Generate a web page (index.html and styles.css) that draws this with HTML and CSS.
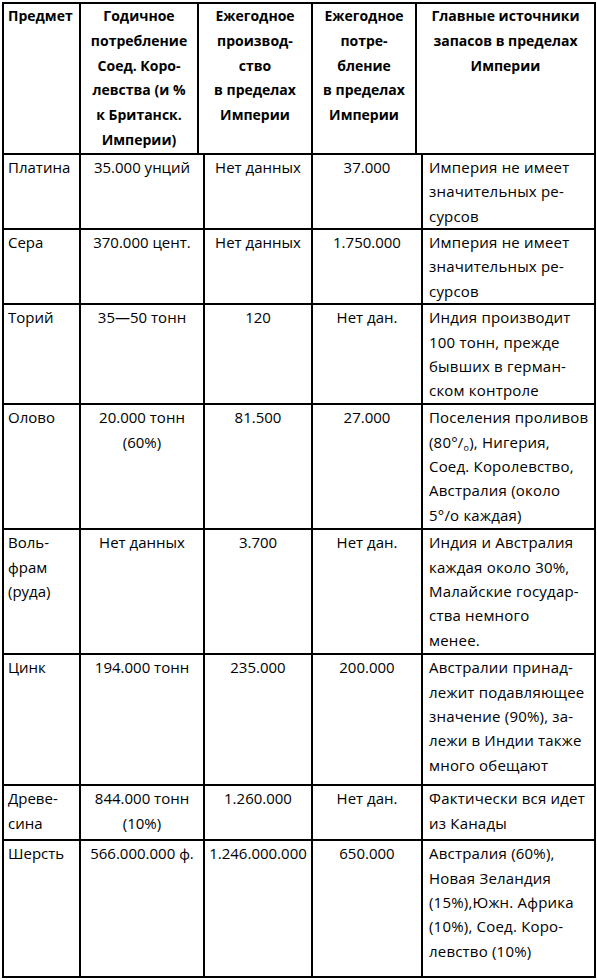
FILE: index.html
```html
<!DOCTYPE html>
<html lang="ru">
<head>
<meta charset="utf-8">
<link rel="stylesheet" href="styles.css">
</head>
<body>
<div class="sheet">
<table class="grid head">
  <colgroup>
    <col class="h1"><col class="h2"><col class="h3"><col class="h4"><col class="h5">
  </colgroup>
  <tr class="r-head">
    <th class="left">Предмет</th>
    <th>Годичное<br>потребление<br>Соед. Коро-<br>левства (и %<br>к Британск.<br>Империи)</th>
    <th>Ежегодное<br>производ-<br>ство<br>в пределах<br>Империи</th>
    <th>Ежегодное<br>потре-<br>бление<br>в пределах<br>Империи</th>
    <th>Главные источники<br>запасов в пределах<br>Империи</th>
  </tr>
</table>
<table class="grid body">
  <colgroup>
    <col class="b1"><col class="b2"><col class="b3"><col class="b4"><col class="b5">
  </colgroup>
  <tr class="r3">
    <td>Платина</td>
    <td class="c">35.000 унций</td>
    <td class="c">Нет данных</td>
    <td class="c">37.000</td>
    <td class="src">Империя не имеет<br>значительных ре-<br>сурсов</td>
  </tr>
  <tr class="r3">
    <td>Сера</td>
    <td class="c">370.000 цент.</td>
    <td class="c">Нет данных</td>
    <td class="c">1.750.000</td>
    <td class="src">Империя не имеет<br>значительных ре-<br>сурсов</td>
  </tr>
  <tr class="r4">
    <td>Торий</td>
    <td class="c">35—50 тонн</td>
    <td class="c">120</td>
    <td class="c">Нет дан.</td>
    <td class="src">Индия производит<br>100 тонн, прежде<br>бывших в герман-<br>ском контроле</td>
  </tr>
  <tr class="r5">
    <td>Олово</td>
    <td class="c">20.000 тонн<br>(60%)</td>
    <td class="c">81.500</td>
    <td class="c">27.000</td>
    <td class="src">Поселения проливов<br>(80°/<sub>o</sub>), Нигерия,<br>Соед. Королевство,<br>Австралия (около<br>5°/о каждая)</td>
  </tr>
  <tr class="r5">
    <td>Воль-<br>фрам<br>(руда)</td>
    <td class="c">Нет данных</td>
    <td class="c">3.700</td>
    <td class="c">Нет дан.</td>
    <td class="src">Индия и Австралия<br>каждая около 30%,<br>Малайские государ-<br>ства немного<br>менее.</td>
  </tr>
  <tr class="r5x">
    <td>Цинк</td>
    <td class="c">194.000 тонн</td>
    <td class="c">235.000</td>
    <td class="c">200.000</td>
    <td class="src">Австралии принад-<br>лежит подавляющее<br>значение (90%), за-<br>лежи в Индии также<br>много обещают</td>
  </tr>
  <tr class="r2">
    <td>Древе-<br>сина</td>
    <td class="c">844.000 тонн<br>(10%)</td>
    <td class="c">1.260.000</td>
    <td class="c">Нет дан.</td>
    <td class="src">Фактически вся идет<br>из Канады</td>
  </tr>
  <tr class="r5y">
    <td>Шерсть</td>
    <td class="c">566.000.000 ф.</td>
    <td class="c">1.246.000.000</td>
    <td class="c">650.000</td>
    <td class="src">Австралия (60%),<br>Новая Зеландия<br>(15%),Южн. Африка<br>(10%), Соед. Коро-<br>левство (10%)</td>
  </tr>
</table>
</div>
</body>
</html>
```
FILE: styles.css
```css
html, body {
  margin: 0;
  padding: 0;
  background: #ffffff;
}
.sheet {
  padding: 2px 0 0 2px;
  width: 594px;
}
.grid {
  border-collapse: collapse;
  table-layout: fixed;
  width: 592px;
  font-family: "Open Sans", "Noto Sans", sans-serif;
  line-height: 24.4px;
  color: #000000;
}
.grid th, .grid td {
  border: 2px solid #000000;
  vertical-align: top;
  padding: 0 4px;
  white-space: nowrap;
  overflow: hidden;
}
.head th {
  font-size: 14px;
  font-weight: 700;
  text-align: center;
  line-height: 24.8px;
}
.head th.left {
  text-align: left;
}
.body {
  margin-top: -2px;
  font-size: 15px;
}
.h1 { width: 77px; }
.h2 { width: 118px; }
.h3 { width: 114px; }
.h4 { width: 104px; }
.h5 { width: 179px; }
.b1 { width: 77px; }
.b2 { width: 124px; }
.b3 { width: 108px; }
.b4 { width: 110px; }
.b5 { width: 173px; }
.grid td.c { text-align: center; }
.grid td.src {
  padding-left: 6px;
  letter-spacing: 0.2px;
}
.r-head { height: 150px; }
.r3 { height: 75px; }
.r4 { height: 100px; }
.r5 { height: 125px; }
.r5x { height: 131px; }
.r2 { height: 55px; }
.r5y { height: 137px; }
sub {
  font-size: 9px;
  line-height: 0;
  vertical-align: -3px;
}
```
